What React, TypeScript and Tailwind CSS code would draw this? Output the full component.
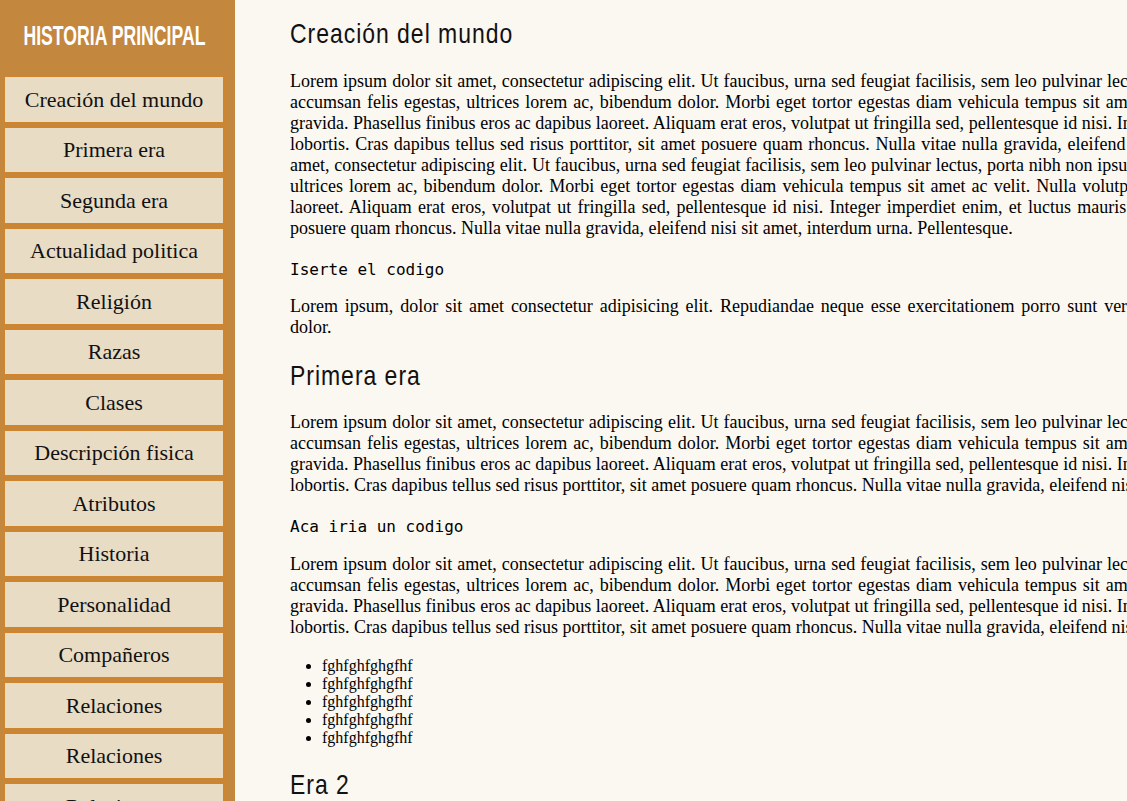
const menu = [
  'Creación del mundo',
  'Primera era',
  'Segunda era',
  'Actualidad politica',
  'Religión',
  'Razas',
  'Clases',
  'Descripción fisica',
  'Atributos',
  'Historia',
  'Personalidad',
  'Compañeros',
  'Relaciones',
  'Relaciones',
  'Relaciones',
];

const lorem =
  'Lorem ipsum dolor sit amet, consectetur adipiscing elit. Ut faucibus, urna sed feugiat facilisis, sem leo pulvinar lectus, porta nibh non ipsum. Vestibulum accumsan felis egestas, ultrices lorem ac, bibendum dolor. Morbi eget tortor egestas diam vehicula tempus sit amet ac velit. Nulla volutpat vel nulla et gravida. Phasellus finibus eros ac dapibus laoreet. Aliquam erat eros, volutpat ut fringilla sed, pellentesque id nisi. Integer imperdiet enim, et luctus mauris lobortis. Cras dapibus tellus sed risus porttitor, sit amet posuere quam rhoncus. Nulla vitae nulla gravida, eleifend nisi sit amet, interdum urna.';

const loremTail = lorem
  .replace('Lorem ipsum dolor sit ', '')
  .replace('vel nulla et gravida. Phasellus finibus', 'et gravida. Finibus')
  .replace('Cras dapibus tellus sed risus', 'Cras risus');

const loremLong = `${lorem} Proin sit ${loremTail} Pellentesque.`;

const heading = "origin-left scale-x-[0.82] font-['Liberation_Sans',sans-serif] text-[28px] leading-[32px] tracking-[1.2px] text-[#111]";
const para = 'text-justify text-[18px] leading-[21px]';
const code = "font-['DejaVu_Sans_Mono',monospace] text-[16px] leading-[19px]";

export default function App() {
  return (
    <div className="flex h-screen w-full overflow-hidden bg-[#fbf7f1] font-['Liberation_Serif',serif] text-black">
      {/* Sidebar */}
      <aside className="flex w-[235px] shrink-0 flex-col bg-[#c4873e]">
        <div className="flex h-[72px] shrink-0 items-center justify-center pr-[6px]">
          <h1 className="inline-block scale-x-[0.63] whitespace-nowrap font-['Liberation_Sans',sans-serif] text-[28px] font-bold uppercase text-white">
            Historia principal
          </h1>
        </div>
        <nav className="mt-[3px] flex flex-col gap-[2px] pl-[3px]">
          {menu.map((item, i) => (
            <a
              key={i}
              href="#"
              className="flex h-[48.5px] w-[222px] shrink-0 items-center justify-center border-2 border-[#d0852c] bg-[#e8dcc5] text-[22px] text-[#111]"
            >
              {item}
            </a>
          ))}
        </nav>
      </aside>

      {/* Content */}
      <main className="shrink-0 pl-[55px] pt-[18px]">
        <div className="flex w-[1115px] flex-col">
          <h2 className={heading}>Creación del mundo</h2>
          <p className={`mt-[21px] ${para}`}>{loremLong}</p>
          <code className={`mt-[21px] ${code}`}>Iserte el codigo</code>
          <p className={`mt-[17px] ${para}`}>
            Lorem ipsum, dolor sit amet consectetur adipisicing elit. Repudiandae neque esse exercitationem porro sunt vero dicta, voluptas magni quis nostrum dolor.
          </p>

          <h2 className={`mt-[22px] ${heading}`}>Primera era</h2>
          <p className={`mt-[20px] ${para}`}>{lorem}</p>
          <code className={`mt-[21px] ${code}`}>Aca iria un codigo</code>
          <p className={`mt-[18px] ${para}`}>{lorem}</p>
          <ul className="mt-[19px] list-disc pl-[32px] text-[16px] leading-[18px]">
            {[0, 1, 2, 3, 4].map((i) => (
              <li key={i}>fghfghfghgfhf</li>
            ))}
          </ul>

          <h2 className={`mt-[22px] ${heading}`}>Era 2</h2>
          <p className={`mt-[20px] ${para}`}>{lorem}</p>
        </div>
      </main>
    </div>
  );
}
